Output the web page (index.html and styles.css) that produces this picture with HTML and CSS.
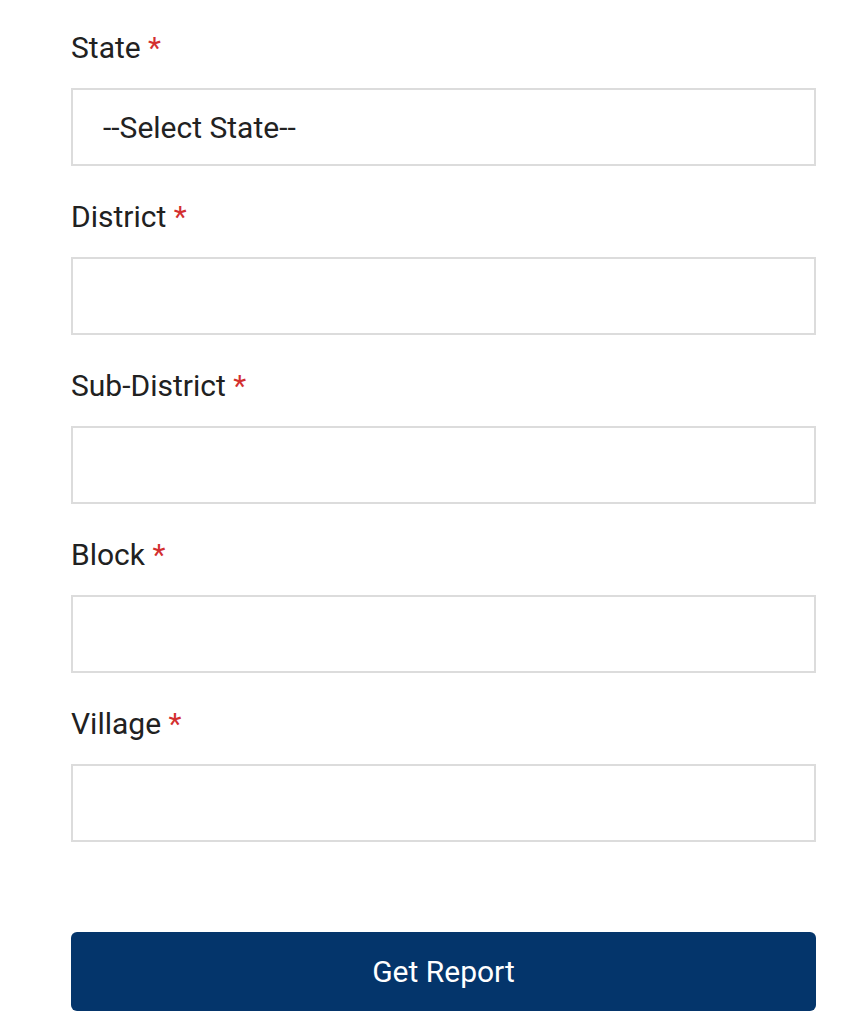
FILE: index.html
```html
<!DOCTYPE html>
<html lang="en">

<head>
    <meta charset="UTF-8" />
    <meta name="viewport" content="width=device-width, initial-scale=1.0" />
    <title>Get Report</title>
    <link rel="stylesheet" href="styles.css">
</head>

<body>
    <form class="report-form">
        <div class="field">
            <label for="state">State <span class="req">*</span></label>
            <select id="state" class="control">
                <option>--Select State--</option>
            </select>
        </div>
        <div class="field">
            <label for="district">District <span class="req">*</span></label>
            <select id="district" class="control"></select>
        </div>
        <div class="field">
            <label for="subdistrict">Sub-District <span class="req">*</span></label>
            <select id="subdistrict" class="control"></select>
        </div>
        <div class="field">
            <label for="block">Block <span class="req">*</span></label>
            <select id="block" class="control"></select>
        </div>
        <div class="field">
            <label for="village">Village <span class="req">*</span></label>
            <select id="village" class="control"></select>
        </div>
        <button type="button" class="submit">Get Report</button>
    </form>
</body>

</html>
```

FILE: styles.css
```css
:root {
    --text: #212121;
    --border: #dcdcdc;
    --required: #d32f2f;
    --primary: #04356b;
}

body {
    margin: 0;
    padding: 0;
    background: #ffffff;
    font-family: Roboto, "Noto Sans", sans-serif;
    color: var(--text);
}

.report-form {
    width: 745px;
    padding: 31px 0 0 71px;
    display: flex;
    flex-direction: column;
    gap: 34px;
}

.field {
    display: flex;
    flex-direction: column;
}

.field label {
    font-size: 30px;
    line-height: 34px;
    margin-bottom: 23px;
}

.field .req {
    color: var(--required);
}

.control {
    appearance: none;
    -webkit-appearance: none;
    box-sizing: border-box;
    width: 100%;
    height: 78px;
    margin: 0;
    padding: 0 0 0 30px;
    border: 2px solid var(--border);
    border-radius: 0;
    background: #ffffff;
    font-family: Roboto, "Noto Sans", sans-serif;
    font-size: 30px;
    color: #222222;
}

.submit {
    margin-top: 56px;
    height: 79px;
    border: none;
    border-radius: 6px;
    background: var(--primary);
    color: #ffffff;
    font-family: Roboto, "Noto Sans", sans-serif;
    font-size: 30px;
    cursor: pointer;
}
```
